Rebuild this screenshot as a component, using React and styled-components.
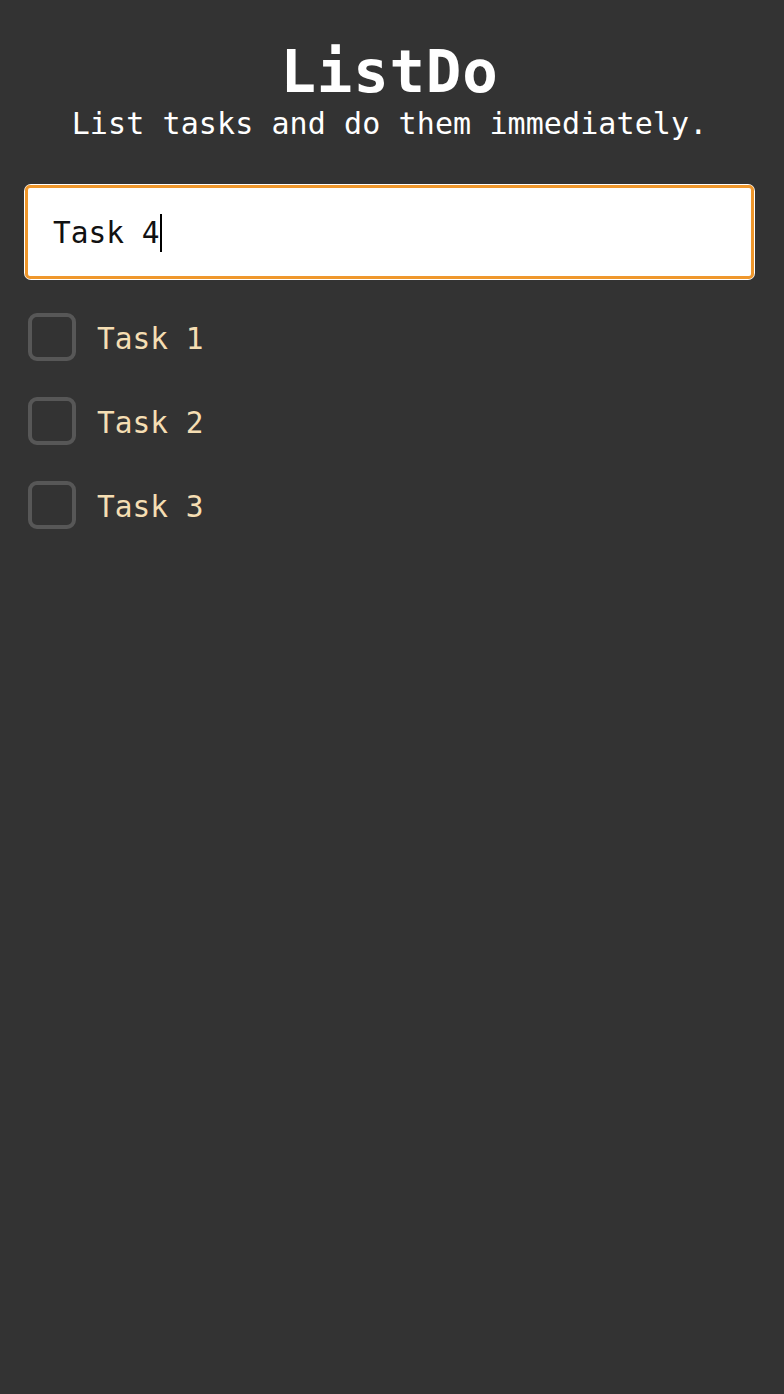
import React from "react";
import styled, { createGlobalStyle } from "styled-components";

const Global = createGlobalStyle`
  html, body { margin: 0; padding: 0; background: #333333; }
  body { font-family: "DejaVu Sans Mono", "Liberation Mono", monospace; }
`;

const Page = styled.div`
  min-height: 1394px;
  background: #333333;
  padding: 38px 29px 0 24px;
  box-sizing: border-box;
`;

const Header = styled.header`
  display: flex;
  flex-direction: column;
  align-items: center;
  color: #ffffff;
`;

const Title = styled.h1`
  margin: 0;
  font-size: 59px;
  line-height: 68px;
  font-weight: 700;
  letter-spacing: 0.8px;
`;

const Subtitle = styled.p`
  margin: 0;
  font-size: 30px;
  line-height: 36px;
  letter-spacing: 0.1px;
`;

const InputFrame = styled.div`
  margin-top: 42px;
  background: #ffffff;
  border-radius: 7px;
  padding: 1px;
`;

const TaskInput = styled.div`
  height: 86px;
  border: 3px solid #ef972c;
  border-radius: 5px;
  background: #ffffff;
  display: flex;
  align-items: center;
  padding-left: 25px;
  padding-top: 2px;
  font-size: 29.5px;
  color: #111111;
`;

const Caret = styled.span`
  display: inline-block;
  width: 2px;
  height: 38px;
  background: #000;
`;

const List = styled.ul`
  list-style: none;
  margin: 33px 0 0;
  padding: 0 0 0 4px;
  display: flex;
  flex-direction: column;
  gap: 36px;
`;

const Row = styled.li`
  display: flex;
  align-items: center;
  gap: 21px;
  height: 48px;
`;

const Box = styled.span`
  width: 48px;
  height: 48px;
  box-sizing: border-box;
  border: 4px solid #575757;
  border-radius: 9px;
  flex-shrink: 0;
`;

const Label = styled.span`
  color: #f5deb3;
  font-size: 29.5px;
  padding-top: 4px;
`;

export default function App() {
  const tasks = ["Task 1", "Task 2", "Task 3"];
  return (
    <Page>
      <Global />
      <Header>
        <Title>ListDo</Title>
        <Subtitle>List tasks and do them immediately.</Subtitle>
      </Header>
      <InputFrame>
        <TaskInput>
          Task 4<Caret />
        </TaskInput>
      </InputFrame>
      <List>
        {tasks.map((t) => (
          <Row key={t}>
            <Box />
            <Label>{t}</Label>
          </Row>
        ))}
      </List>
    </Page>
  );
}
